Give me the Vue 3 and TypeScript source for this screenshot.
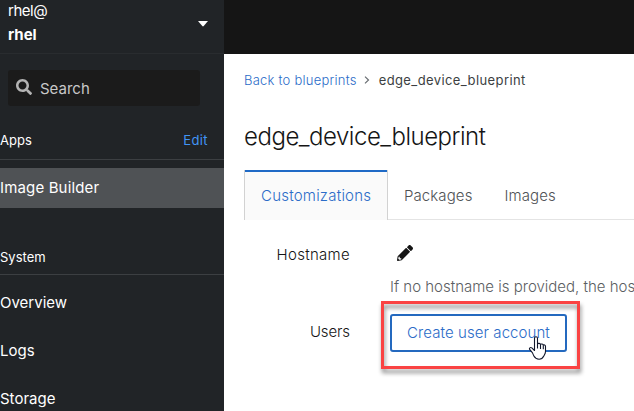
<script setup lang="ts">
import { ref } from 'vue'

interface Tab {
  id: string
  label: string
}

const tabs: Tab[] = [
  { id: 'customizations', label: 'Customizations' },
  { id: 'packages', label: 'Packages' },
  { id: 'images', label: 'Images' },
]
const activeTab = ref<string>('customizations')
const systemLinks: string[] = ['Overview', 'Logs', 'Storage']
</script>

<template>
  <div class="shell">
    <aside class="sidebar">
      <header class="host">
        <div class="host-name">
          <span class="host-user">rhel@</span>
          <strong class="host-machine">rhel</strong>
        </div>
        <svg class="caret" width="10" height="6" viewBox="0 0 10 6"><path d="M0 0h10L5.7 5.1a1 1 0 0 1-1.4 0z" fill="#fff" /></svg>
      </header>
      <div class="search">
        <svg width="16" height="16" viewBox="0 0 512 512"><path fill="#b4b4b4" d="M505 442.7L405.3 343c-4.500-4.500-10.600-7-17-7H372c27.600-35.300 44-79.700 44-128C416 93.100 322.900 0 208 0S0 93.100 0 208s93.100 208 208 208c48.300 0 92.700-16.400 128-44v16.300c0 6.400 2.500 12.500 7 17l99.700 99.700c9.400 9.400 24.600 9.400 33.900 0l28.300-28.300c9.400-9.400 9.400-24.600.1-34zM208 336c-70.700 0-128-57.200-128-128 0-70.700 57.200-128 128-128 70.700 0 128 57.200 128 128 0 70.700-57.200 128-128 128z" /></svg>
        <span class="search-text">Search</span>
      </div>
      <div class="group group-apps">
        <span>Apps</span>
        <a class="edit">Edit</a>
      </div>
      <a class="nav-link current">Image Builder</a>
      <div class="group group-system"><span>System</span></div>
      <nav class="links">
        <a v-for="link in systemLinks" :key="link" class="nav-link">{{ link }}</a>
      </nav>
    </aside>

    <div class="content">
      <div class="masthead"></div>
      <main class="page">
        <nav class="breadcrumb">
          <a class="back">Back to blueprints</a>
          <svg width="6" height="8" viewBox="0 0 6 8"><path d="M1 .6L4.500 4 1 7.400" fill="none" stroke="#6a6e73" stroke-width="1.200" /></svg>
          <span class="here">edge_device_blueprint</span>
        </nav>
        <h1 class="title">edge_device_blueprint</h1>
        <div class="tabs">
          <button
            v-for="tab in tabs"
            :key="tab.id"
            class="tab"
            :class="{ active: tab.id === activeTab }"
            @click="activeTab = tab.id"
          >{{ tab.label }}</button>
        </div>
        <div class="form">
          <span class="label">Hostname</span>
          <div class="field hostname">
            <svg class="pencil" width="16" height="16" viewBox="0 0 512 512"><path fill="#151515" d="M497.900 142.100l-46.100 46.100c-4.700 4.700-12.300 4.700-17 0l-111-111c-4.700-4.700-4.700-12.300 0-17l46.100-46.100c18.700-18.700 49.100-18.700 67.900 0l60.100 60.100c18.800 18.700 18.800 49.100 0 67.900zM284.200 99.800L21.600 362.400.4 483.900c-2.900 16.400 11.400 30.600 27.800 27.800l121.500-21.300 262.600-262.600c4.700-4.700 4.700-12.300 0-17l-111-111c-4.800-4.700-12.400-4.700-17.100 0zM88 424h48v36.300l-64.500 11.300-31.100-31.100L51.700 376H88v48z" /></svg>
            <p class="hint">If no hostname is provided, the hostname will be determined by the OS</p>
          </div>
          <span class="label users">Users</span>
          <div class="field">
            <div class="action">
              <button class="create">Create user account</button>
              <div class="highlight"></div>
              <svg class="pointer" width="19" height="24" viewBox="0 0 19 24"><path d="M6.500 14.500V2.300a1.500 1.500 0 0 1 3 0V8c.4-1 2.800-.8 3 .5.500-.9 2.600-.6 2.800.7.600-.7 2.200-.2 2.200 1.200v5.100c0 2-1 3.200-1.700 4.500-1.100 2.300-2.600 3.200-4.700 3.200-2.500 0-4.100-1-5.200-3.100l-1.400-3.200-2.800-3.500c-.9-1.200.7-2.400 2.100-1.500z" fill="#fff" stroke="#11172b" stroke-width="1.100" stroke-linejoin="round" /><path d="M9.500 8v4.500M12.500 8.500V13M15.300 9.200v4" fill="none" stroke="#11172b" stroke-width="1.100" /></svg>
            </div>
          </div>
        </div>
      </main>
    </div>
  </div>
</template>

<style>
body {
  margin: 0;
  overflow: hidden;
}
</style>

<style scoped>
.shell {
  display: flex;
  width: 634px;
  height: 411px;
  overflow: hidden;
  background: #fff;
  font-family: Inter, "Liberation Sans", sans-serif;
  font-size: 15px;
  font-weight: 300;
  color: #151515;
}
.sidebar {
  flex: 0 0 224px;
  background: #212427;
  color: #fff;
  font-weight: 400;
  overflow: hidden;
}
.host {
  display: flex;
  justify-content: space-between;
  align-items: center;
  box-sizing: border-box;
  height: 54px;
  padding: 0 16px 0 8px;
  border-bottom: 1px solid #292c2f;
}
.host-name {
  display: flex;
  flex-direction: column;
  line-height: 24px;
  padding-bottom: 7px;
}
.host-user {
  letter-spacing: -0.5px;
}
.host-machine {
  font-weight: 700;
}
.caret {
  margin-top: -6px;
}
.search {
  display: flex;
  align-items: center;
  gap: 8px;
  box-sizing: border-box;
  width: 192px;
  height: 36px;
  margin: 16px 0 0 8px;
  padding: 0 8px;
  border-radius: 3px;
  background: #1b1b1b;
  color: #c8c8c8;
}
.search svg {
  margin-top: -2px;
}
.group {
  display: flex;
  justify-content: space-between;
  box-sizing: border-box;
  padding-right: 16px;
  border-bottom: 1px solid #3c3f42;
  font-size: 13px;
  line-height: 20px;
}
.group-apps {
  height: 30px;
  margin-top: 24px;
}
.edit {
  color: #4294f5;
  letter-spacing: 0.4px;
}
.nav-link {
  display: block;
  height: 48px;
  line-height: 48px;
}
.current {
  height: 40px;
  margin-top: 8px;
  line-height: 40px;
  letter-spacing: 0.15px;
  background: #4f5255;
}
.group-system {
  height: 28px;
  margin-top: 39px;
}
.links {
  padding-top: 4px;
}
.content {
  flex: 1;
  min-width: 0;
}
.masthead {
  height: 54px;
  background: #151515;
}
.page {
  padding-left: 20px;
}
.breadcrumb {
  display: flex;
  align-items: center;
  height: 20px;
  padding-top: 16px;
  font-size: 13px;
}
.back {
  color: #2b6cc8;
  letter-spacing: 0.24px;
}
.breadcrumb svg {
  margin: 0 9px 0 7px;
}
.here {
  font-weight: 400;
  letter-spacing: 0.4px;
  color: #3c3f42;
}
.title {
  margin: 31px 0 0;
  font-size: 24px;
  font-weight: 300;
  line-height: 32px;
  letter-spacing: -0.48px;
}
.tabs {
  display: flex;
  height: 50px;
  margin-top: 17px;
  box-shadow: inset 0 -1px #e4e4e4;
}
.tab {
  box-sizing: border-box;
  padding: 0 16px;
  border: 0;
  background: none;
  color: #4f5255;
  font: inherit;
  letter-spacing: 0.1px;
}
.tab.active {
  width: 144px;
  border: solid #d2d2d2;
  border-width: 0 1px;
  box-shadow: inset 0 2px #1f6ac6;
  background: #fafafa;
  color: #2b6cc8;
  letter-spacing: 0.22px;
}
.form {
  display: grid;
  grid-template-columns: 106px 1fr;
  column-gap: 40px;
  padding-top: 23px;
  line-height: 24px;
}
.label {
  text-align: right;
  letter-spacing: 0.3px;
}
.hostname {
  height: 77px;
}
.pencil {
  display: block;
  margin: 2px 0 0 7px;
}
.hint {
  margin: 14px 0 0;
  color: #5b5e62;
  white-space: nowrap;
}
.users {
  letter-spacing: -0.1px;
}
.action {
  position: relative;
  width: 177px;
  margin-top: -6px;
}
.create {
  display: block;
  box-sizing: border-box;
  width: 177px;
  height: 38px;
  padding: 0;
  border: 2px solid #2469bf;
  border-radius: 3px;
  background: #fff;
  color: #2b6cc8;
  font: inherit;
  letter-spacing: 0.08px;
}
.highlight {
  position: absolute;
  left: -9px;
  top: -13px;
  box-sizing: border-box;
  width: 199px;
  height: 68px;
  border: 3px solid #fa4343;
  filter: drop-shadow(1px 4px 2px rgba(0, 0, 0, 0.45));
}
.pointer {
  position: absolute;
  left: 138px;
  top: 22px;
}
</style>
